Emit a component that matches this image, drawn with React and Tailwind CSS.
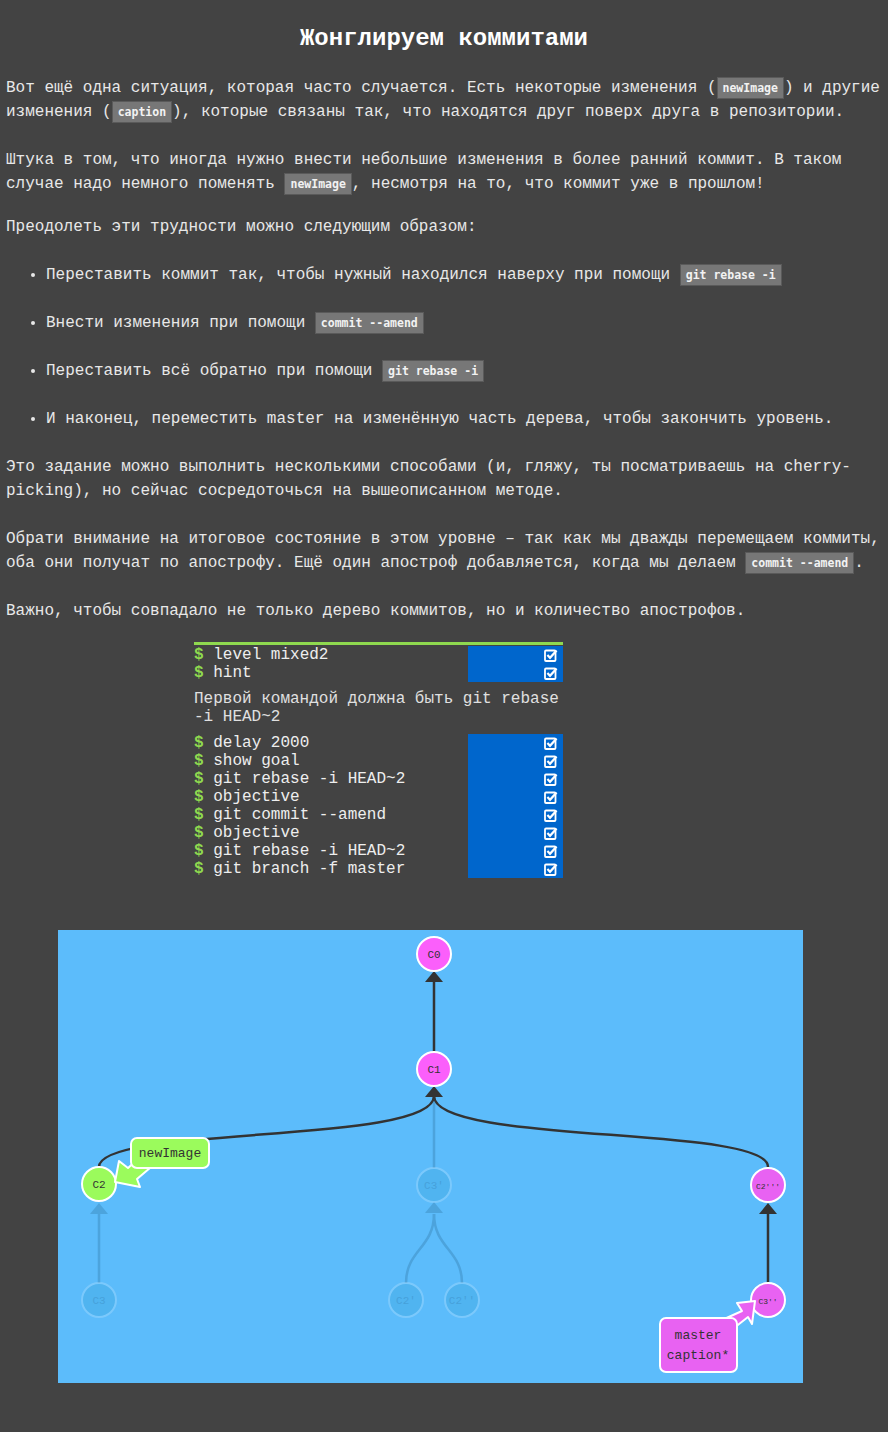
const mono = { fontFamily: '"Liberation Mono", "Courier New", monospace' };

const Code = ({ children }) => (
  <code className="inline-block align-middle bg-[#777777] border border-[#5a5a5a] text-[#f2f2f2] font-bold text-[11.5px] leading-[14px] px-[5px] py-[3px] [font-family:'DejaVu_Sans_Mono',monospace]">
    {children}
  </code>
);

const Check = () => (
  <svg width="14" height="14" viewBox="0 0 14 14">
    <rect x="1" y="2.5" width="10.5" height="10.5" rx="1" fill="none" stroke="#fff" strokeWidth="1.8" />
    <path d="M3.4 7 L6 9.8 L12.6 2.4" fill="none" stroke="#fff" strokeWidth="2.2" />
  </svg>
);

const Cmd = ({ text }) => (
  <div className="flex h-[18px] leading-[18px]">
    <div className="flex-1 text-[#eeeeee]">
      <span className="text-[#8fd94f] font-bold">$</span> {text}
    </div>
    <div className="w-[95px] bg-[#0066cc] flex justify-end items-center pr-[5px]">
      <Check />
    </div>
  </div>
);

const Node = ({ x, y, label, fill, small, ghost }) => (
  <g opacity={ghost ? 0.35 : 1}>
    <circle cx={x} cy={y} r="17" fill={ghost ? "#3aa6dc" : fill} stroke={ghost ? "#b7e2ff" : "#ffffff"} strokeWidth="2" />
    <text x={x} y={y + 4} textAnchor="middle" fontSize={small ? 8 : 11} fill={ghost ? "#1f6f9f" : "#333"} fontFamily="Liberation Mono, monospace">
      {label}
    </text>
  </g>
);

const Arrow = ({ x, y, color = "#333" }) => (
  <polygon points={`${x},${y} ${x - 9},${y + 11} ${x + 9},${y + 11}`} fill={color} />
);

const Graph = () => {
  const ghost = "#3f8fc4";
  return (
    <svg width="745" height="453" viewBox="0 0 745 453">
      {/* ghost edges */}
      <g opacity="0.55" stroke={ghost} strokeWidth="2.5" fill="none">
        <path d="M41 353 L41 284" />
        <path d="M376 238 L376 166" />
        <path d="M348 353 C348 320, 376 318, 376 284" />
        <path d="M404 353 C404 320, 376 318, 376 284" />
      </g>
      <g opacity="0.55">
        <Arrow x={41} y={273} color={ghost} />
        <Arrow x={376} y={272} color={ghost} />
      </g>
      {/* real edges */}
      <g stroke="#333" strokeWidth="2.5" fill="none">
        <path d="M376 122 L376 52" />
        <path d="M41 237 C41 195, 376 215, 376 166" />
        <path d="M710 237 C710 195, 376 215, 376 166" />
        <path d="M710 353 L710 284" />
      </g>
      <Arrow x={376} y={41} />
      <Arrow x={376} y={156} />
      <Arrow x={710} y={273} />

      <Node x={376} y={24} label="C0" fill="#fb5ffb" />
      <Node x={376} y={139} label="C1" fill="#fb5ffb" />
      <Node x={41} y={254} label="C2" fill="#9bfb5c" />
      <Node x={376} y={255} label="C3'" ghost />
      <Node x={710} y={255} label="C2'''" fill="#e862f2" small />
      <Node x={41} y={370} label="C3" ghost />
      <Node x={348} y={370} label="C2'" ghost />
      <Node x={404} y={370} label="C2''" ghost />
      <Node x={710} y={370} label="C3''" fill="#e862f2" small />

      {/* newImage label */}
      <polygon points="57,252 61,231 70,238 88,222 99,232 79,249 82,257" fill="#9bfb5c" stroke="#fff" strokeWidth="2" strokeLinejoin="round" />
      <rect x="73" y="208" width="78" height="30" rx="6" fill="#9bfb5c" stroke="#fff" strokeWidth="2" />
      <text x="112" y="227" textAnchor="middle" fontSize="13" fill="#333" fontFamily="Liberation Mono, monospace">newImage</text>

      {/* master label */}
      <polygon points="697,371 679,373 684,381 664,390 676,398 690,387 694,394" fill="#e862f2" stroke="#fff" strokeWidth="2" strokeLinejoin="round" />
      <rect x="602" y="388" width="77" height="54" rx="6" fill="#e862f2" stroke="#fff" strokeWidth="2" />
      <text x="640" y="409" textAnchor="middle" fontSize="13" fill="#333" fontFamily="Liberation Mono, monospace">master</text>
      <text x="640" y="429" textAnchor="middle" fontSize="13" fill="#333" fontFamily="Liberation Mono, monospace">caption*</text>
    </svg>
  );
};

export default function App() {
  return (
    <div className="min-h-[1432px] bg-[#434343] text-[#e8e8e8] pb-[49px]" style={mono}>
      <div className="px-[6px] pt-[25px] text-[16px] leading-[24px]">
        <h2 className="text-center text-white font-bold text-[24px] leading-[28px]">
          Жонглируем коммитами
        </h2>
        <p className="mt-[23px]">
          Вот ещё одна ситуация, которая часто случается. Есть некоторые изменения (<Code>newImage</Code>) и другие изменения (<Code>caption</Code>), которые связаны так, что находятся друг поверх друга в репозитории.
        </p>
        <p className="mt-[24px]">
          Штука в том, что иногда нужно внести небольшие изменения в более ранний коммит. В таком случае надо немного поменять <Code>newImage</Code>, несмотря на то, что коммит уже в прошлом!
        </p>
        <p className="mt-[19px]">Преодолеть эти трудности можно следующим образом:</p>
        <ul className="list-disc pl-[40px] mt-[24px] flex flex-col gap-[24px]">
          <li>
            Переставить коммит так, чтобы нужный находился наверху при помощи <Code>git rebase -i</Code>
          </li>
          <li>
            Внести изменения при помощи <Code>commit --amend</Code>
          </li>
          <li>
            Переставить всё обратно при помощи <Code>git rebase -i</Code>
          </li>
          <li>И наконец, переместить master на изменённую часть дерева, чтобы закончить уровень.</li>
        </ul>
        <p className="mt-[24px]">
          Это задание можно выполнить несколькими способами (и, гляжу, ты посматриваешь на cherry-picking), но сейчас сосредоточься на вышеописанном методе.
        </p>
        <p className="mt-[24px]">
          Обрати внимание на итоговое состояние в этом уровне – так как мы дважды перемещаем коммиты, оба они получат по апострофу. Ещё один апостроф добавляется, когда мы делаем <Code>commit --amend</Code>.
        </p>
        <p className="mt-[24px]">Важно, чтобы совпадало не только дерево коммитов, но и количество апострофов.</p>
      </div>

      <div className="ml-[194px] w-[369px] mt-[19px] border-t-[3px] border-[#8fd94f] pt-[1px] text-[16px]">
        <Cmd text="level mixed2" />
        <Cmd text="hint" />
        <div className="py-[8px] leading-[18px] text-[#e0e0e0]">
          Первой командой должна быть git rebase <span className="whitespace-nowrap">-i HEAD~2</span>
        </div>
        <Cmd text="delay 2000" />
        <Cmd text="show goal" />
        <Cmd text="git rebase -i HEAD~2" />
        <Cmd text="objective" />
        <Cmd text="git commit --amend" />
        <Cmd text="objective" />
        <Cmd text="git rebase -i HEAD~2" />
        <Cmd text="git branch -f master" />
      </div>

      <div className="ml-[58px] mt-[52px] w-[745px] h-[453px] bg-[#5cbcfb]">
        <Graph />
      </div>
    </div>
  );
}
